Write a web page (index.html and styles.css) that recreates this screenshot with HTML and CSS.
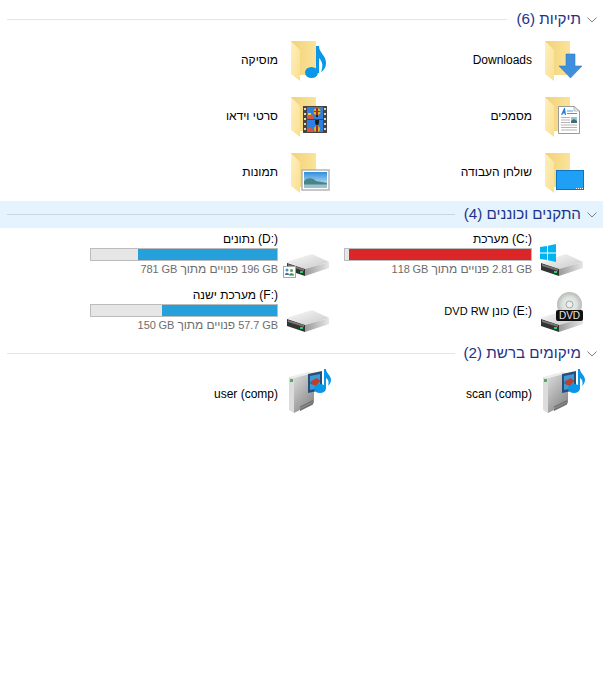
FILE: index.html
```html
<!DOCTYPE html>
<html lang="he" dir="rtl">
<head>
    <meta charset="UTF-8">
    <title>מחשב זה</title>
    <link rel="stylesheet" href="styles.css">
</head>
<body>
    <svg class="icon-defs" aria-hidden="true">
        <defs>
            <linearGradient id="folder-back" x1="0" y1="0" x2="1" y2="0">
                <stop offset="0" stop-color="#f2d277"/>
                <stop offset="1" stop-color="#fbe39a"/>
            </linearGradient>
            <linearGradient id="folder-flap" x1="0" y1="0" x2="1" y2="1">
                <stop offset="0" stop-color="#fff0bd"/>
                <stop offset="1" stop-color="#f9df91"/>
            </linearGradient>
            <linearGradient id="disk-top" x1="0" y1="0" x2="1" y2="1">
                <stop offset="0" stop-color="#fbfbfb"/>
                <stop offset="1" stop-color="#c9c9c9"/>
            </linearGradient>
            <linearGradient id="disk-side" x1="0" y1="0" x2="1" y2="0">
                <stop offset="0" stop-color="#9a9a9a"/>
                <stop offset="1" stop-color="#e6e6e6"/>
            </linearGradient>
            <linearGradient id="net-front" x1="0" y1="0" x2="0.600" y2="1">
                <stop offset="0" stop-color="#dedede"/>
                <stop offset="1" stop-color="#8a8a8a"/>
            </linearGradient>
            <linearGradient id="sky" x1="0" y1="0" x2="0" y2="1">
                <stop offset="0" stop-color="#2f8fdc"/>
                <stop offset="1" stop-color="#e6f3fa"/>
            </linearGradient>
            <radialGradient id="disc" cx="0.5" cy="0.5" r="0.5">
                <stop offset="0" stop-color="#f4f4f4"/>
                <stop offset="0.6" stop-color="#d8e2dc"/>
                <stop offset="1" stop-color="#b8b8b8"/>
            </radialGradient>
            <symbol id="folder" viewBox="0 0 48 48" overflow="visible">
                <path d="M5 4H30V38H14Z" fill="url(#folder-back)"/>
                <path d="M5 4L14 13V44L5 37Z" fill="url(#folder-flap)"/>
            </symbol>
            <symbol id="disk" viewBox="0 0 48 48" overflow="visible">
                <path d="M0 30L26 22L43 30L19 37Z" fill="url(#disk-top)"/>
                <path d="M19 37L43 30V36L19 44Z" fill="url(#disk-side)"/>
                <path d="M1 31L19 37V44L1 38Z" fill="#333"/>
                <path d="M2 32L18 37V39L2 34Z" fill="#777"/>
                <rect x="14" y="39" width="3" height="2" fill="#2ecc71"/>
            </symbol>
            <symbol id="net-drive" viewBox="0 0 48 48" overflow="visible">
                <path d="M3 6L8 7V42L3 39Z" fill="#dcdcdc"/>
                <path d="M3 6L22 1L28 2L8 7Z" fill="#ececec"/>
                <path d="M8 7L28 2V32L8 42Z" fill="url(#net-front)"/>
                <rect x="4" y="8" width="3" height="3" fill="#4caf50"/>
                <path d="M14 38L27 31.500V33.500L14 40ZM14 35.500L27 29V30.500L14 37Z" fill="#707070"/>
                <path d="M22 3L36 0V19L22 22Z" fill="#274f78"/>
                <path d="M24 5L34 3V9.500L24 11.500Z" fill="#3f98d8"/>
                <path d="M24 12.500L34 10.500V17L24 19Z" fill="#3f98d8"/>
                <path d="M25 10L31 7L34 10L30 15L25 13Z" fill="#b8432c"/>
                <ellipse cx="34" cy="17.500" rx="6" ry="4.500" fill="#0a97e8"/>
                <path d="M38 -2H40C40 2 45 4 45 9C45 12 43 14 42 15C43 12 43 9 40 7V18H38Z" fill="#0a97e8"/>
            </symbol>
        </defs>
    </svg>

    <section class="group">
        <h2 class="group-head">
            <svg class="chevron" viewBox="0 0 10 6"><path d="M0.500 0.500L5 5L9.500 0.500"/></svg>
            <span class="group-title">תיקיות (6)</span>
            <span class="group-line"></span>
        </h2>
        <div class="tiles">
            <div class="tile">
                <svg class="tile-icon" viewBox="0 0 48 48">
                    <use href="#folder"/>
                    <path d="M26 17H35V29H42L30.500 41L19 29H26Z" fill="#3f8fdc" stroke="#2f7ccb" stroke-width="0.600"/>
                </svg>
                <span class="tile-name">Downloads</span>
            </div>
            <div class="tile">
                <svg class="tile-icon" viewBox="0 0 48 48">
                    <use href="#folder"/>
                    <ellipse cx="25.500" cy="35.500" rx="6.500" ry="5.500" fill="#0a97e8"/>
                    <path d="M30 9H33C33 16 40 18 40 26C40 31 37 34 35 35C37 30 37 25 33 21V36H30Z" fill="#0a97e8"/>
                </svg>
                <span class="tile-name">מוסיקה</span>
            </div>
            <div class="tile">
                <svg class="tile-icon" viewBox="0 0 48 48">
                    <use href="#folder"/>
                    <path d="M18.500 13.500H34L39.500 18V40.500H18.500Z" fill="#fff" stroke="#9a9a9a"/>
                    <path d="M34 13.500V18H39.500Z" fill="#dfe6ec" stroke="#9a9a9a" stroke-width="0.600"/>
                    <path d="M21 22L24 15H25L26 22H24.800L24.600 20.500H23L22.300 22Z" fill="#2a7fd6"/>
                    <path d="M27 18H33M27 20.500H37" stroke="#4a9be0"/>
                    <path d="M21 24.500H30M21 27H30M21 29.500H30M21 32H37M21 34.500H37M21 37H37" stroke="#b5b5b5"/>
                    <rect x="31" y="24" width="6" height="6" fill="#9cc0d0"/>
                    <path d="M31 28L34 26L37 28V30H31Z" fill="#3f6a6e"/>
                </svg>
                <span class="tile-name">מסמכים</span>
            </div>
            <div class="tile">
                <svg class="tile-icon" viewBox="0 0 48 48">
                    <use href="#folder"/>
                    <rect x="17" y="13" width="24" height="27" fill="#444"/>
                    <path d="M18 15h2v2h-2zM18 20h2v2h-2zM18 25h2v2h-2zM18 30h2v2h-2zM18 35h2v2h-2zM38 15h2v2h-2zM38 20h2v2h-2zM38 25h2v2h-2zM38 30h2v2h-2zM38 35h2v2h-2z" fill="#e4d9b0"/>
                    <rect x="21" y="14" width="16" height="12" fill="#2f7fe0"/>
                    <rect x="21" y="27" width="16" height="12" fill="#2f7fe0"/>
                    <path d="M21 22L24 20L28 23L27 26H21Z" fill="#d8553f"/>
                    <path d="M22 20h3v2h-3z" fill="#e8c93a"/>
                    <circle cx="31" cy="18.500" r="3.500" fill="#e3b21c"/>
                    <path d="M30 15h2v7h-2zM27.500 18h7v1h-7z" fill="#a52c1f"/>
                    <path d="M30 22h2v2h-2z" fill="#222"/>
                    <circle cx="31" cy="36" r="3" fill="#e3b21c"/>
                    <path d="M30 33h2v6h-2z" fill="#a52c1f"/>
                    <path d="M29 27h4v3l-1 2h-2l-1-2z" fill="#1e1e1e"/>
                    <path d="M21 36L24 34L27 37V39H21Z" fill="#d8553f"/>
                </svg>
                <span class="tile-name">סרטי וידאו</span>
            </div>
            <div class="tile">
                <svg class="tile-icon" viewBox="0 0 48 48">
                    <use href="#folder"/>
                    <rect x="16.500" y="21.500" width="27" height="19" fill="#1fa0f5" stroke="#0c74c4"/>
                    <path d="M36 39h1v1h-1zM38 39h1v1h-1zM40 39h1v1h-1zM42 39h1v1h-1z" fill="#fff"/>
                </svg>
                <span class="tile-name">שולחן העבודה</span>
            </div>
            <div class="tile">
                <svg class="tile-icon" viewBox="0 0 48 48">
                    <use href="#folder"/>
                    <rect x="16" y="21" width="27" height="20" fill="#fff" stroke="#b0b0b0" stroke-width="1.400"/>
                    <rect x="18" y="23" width="23" height="16" fill="url(#sky)"/>
                    <path d="M18 32C22 28 27 29 30 32C34 33 38 33 41 34V39H18Z" fill="#4a8583"/>
                    <rect x="18" y="35.500" width="23" height="3.500" fill="#9cc0d3"/>
                </svg>
                <span class="tile-name">תמונות</span>
            </div>
        </div>
    </section>

    <section class="group">
        <h2 class="group-head group-head-active">
            <svg class="chevron" viewBox="0 0 10 6"><path d="M0.500 0.500L5 5L9.500 0.500"/></svg>
            <span class="group-title">התקנים וכוננים (4)</span>
            <span class="group-line"></span>
        </h2>
        <div class="tiles">
            <div class="tile">
                <svg class="tile-icon" viewBox="0 0 48 48">
                    <use href="#disk"/>
                    <path d="M0 15L7 14V20.500H0ZM8 13.800L16 12V20.500H8ZM0 21.500H7V28L0 27ZM8 21.500H16V30L8 28.200Z" fill="#00b4f1"/>
                </svg>
                <div class="drive-info">
                    <div class="drive-name"><bdi dir="ltr">(C:)</bdi> מערכת</div>
                    <div class="bar"><div class="bar-fill bar-full" style="width: 98%"></div></div>
                    <div class="drive-free"><bdi dir="ltr">2.81 GB</bdi> פנויים מתוך <bdi dir="ltr">118 GB</bdi></div>
                </div>
            </div>
            <div class="tile">
                <svg class="tile-icon" viewBox="0 0 48 48">
                    <use href="#disk"/>
                    <rect x="-2.500" y="34.500" width="12" height="11" fill="#fff" stroke="#a8a8a8"/>
                    <circle cx="1" cy="38" r="1.500" fill="#4f8fc0"/>
                    <path d="M-1 43C-1 40 3 40 3 43Z" fill="#3c78a8"/>
                    <circle cx="5.500" cy="38.500" r="1.500" fill="#5aa05a"/>
                    <path d="M3 43.500C3 40.500 8 40.500 8 43.500Z" fill="#3f8a4a"/>
                </svg>
                <div class="drive-info">
                    <div class="drive-name"><bdi dir="ltr">(D:)</bdi> נתונים</div>
                    <div class="bar"><div class="bar-fill" style="width: 74.900%"></div></div>
                    <div class="drive-free"><bdi dir="ltr">196 GB</bdi> פנויים מתוך <bdi dir="ltr">781 GB</bdi></div>
                </div>
            </div>
            <div class="tile">
                <svg class="tile-icon" viewBox="0 0 48 48">
                    <use href="#disk"/>
                    <circle cx="29.500" cy="16.500" r="12.500" fill="url(#disc)"/>
                    <circle cx="29.500" cy="16.500" r="3.500" fill="#eee" stroke="#a5a5a5"/>
                    <rect x="16" y="22" width="27" height="11" rx="2" fill="#111"/>
                    <text class="dvd-label" x="29.500" y="31" text-anchor="middle">DVD</text>
                </svg>
                <span class="tile-name"><bdi dir="ltr">(E:)</bdi> כונן <span class="name-small">DVD RW</span></span>
            </div>
            <div class="tile">
                <svg class="tile-icon" viewBox="0 0 48 48"><use href="#disk"/></svg>
                <div class="drive-info">
                    <div class="drive-name"><bdi dir="ltr">(F:)</bdi> מערכת ישנה</div>
                    <div class="bar"><div class="bar-fill" style="width: 61.800%"></div></div>
                    <div class="drive-free"><bdi dir="ltr">57.7 GB</bdi> פנויים מתוך <bdi dir="ltr">150 GB</bdi></div>
                </div>
            </div>
        </div>
    </section>

    <section class="group">
        <h2 class="group-head">
            <svg class="chevron" viewBox="0 0 10 6"><path d="M0.500 0.500L5 5L9.500 0.500"/></svg>
            <span class="group-title">מיקומים ברשת (2)</span>
            <span class="group-line"></span>
        </h2>
        <div class="tiles">
            <div class="tile">
                <svg class="tile-icon" viewBox="0 0 48 48"><use href="#net-drive"/></svg>
                <span class="tile-name"><bdi dir="ltr">scan (comp)</bdi></span>
            </div>
            <div class="tile">
                <svg class="tile-icon" viewBox="0 0 48 48"><use href="#net-drive"/></svg>
                <span class="tile-name"><bdi dir="ltr">user (comp)</bdi></span>
            </div>
        </div>
    </section>
</body>
</html>
```

FILE: styles.css
```css
body {
    margin: 0;
    padding-top: 6px;
    font-family: 'Liberation Sans', 'DejaVu Sans', sans-serif;
    font-size: 12px;
    color: #000;
    background-color: #fff;
}
.icon-defs {
    display: block;
    width: 0;
    height: 0;
}
.group-head {
    display: flex;
    align-items: center;
    height: 27px;
    margin: 0;
    padding: 0 6px 0 7px;
    font-size: 15.200px;
    font-weight: normal;
}
.group-head-active {
    background-color: #e5f3ff;
}
.chevron {
    width: 10px;
    height: 6px;
    margin-left: 6px;
    fill: none;
    stroke: #808080;
}
.group-title {
    margin-bottom: 2px;
    color: #1e3287;
    white-space: nowrap;
}
.group-line {
    flex: 1;
    height: 1px;
    margin-right: 9px;
    background-color: #e5e5e5;
}
.group-head-active .group-line {
    background-color: #c8d6e4;
}
.tiles {
    display: grid;
    grid-template-columns: repeat(2, 254px);
    grid-auto-rows: 56px;
    padding-right: 15px;
}
.tile {
    display: flex;
    align-items: center;
}
.tile-icon {
    flex: none;
    width: 48px;
    height: 48px;
    margin-left: 8px;
    overflow: visible;
}
.tile-name {
    margin-bottom: 2px;
    line-height: 16px;
    white-space: nowrap;
}
.name-small {
    font-size: 11px;
}
.drive-info {
    width: 188px;
    align-self: flex-start;
    padding-top: 3px;
}
.drive-name {
    line-height: 16px;
    white-space: nowrap;
}
.bar {
    box-sizing: border-box;
    height: 13px;
    margin-top: 1px;
    background-color: #e6e6e6;
    border: 1px solid #bcbcbc;
}
.bar-fill {
    height: 100%;
    background-color: #26a0da;
}
.bar-full {
    background-color: #da2626;
}
.drive-free {
    line-height: 16px;
    letter-spacing: -0.100px;
    color: #6d6d6d;
    white-space: nowrap;
}
.drive-free bdi {
    font-size: 11px;
}
.dvd-label {
    font-family: 'Liberation Sans', sans-serif;
    font-size: 10px;
    fill: #e8e8e8;
}
```
